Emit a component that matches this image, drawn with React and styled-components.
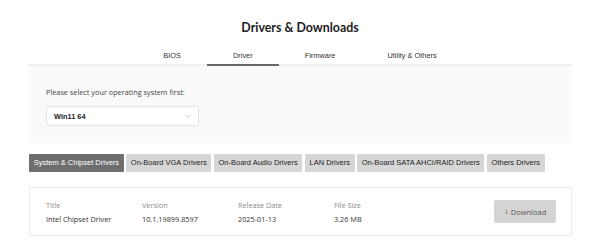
import React from "react"
import styled, { createGlobalStyle } from "styled-components"

const GlobalStyle = createGlobalStyle`
  *{
    margin:0;
    padding:0;
    box-sizing:border-box;
  }
  body{
    background:#fff;
    font-family:"Liberation Sans", Arial, sans-serif;
    color:#333;
  }
`

const Page = styled.div`
  width:544px;
  margin-left:28px;
  padding-top:18px;
`
const Title = styled.h1`
  font-family:Lato, "Open Sans", sans-serif;
  font-size:12.4px;
  font-weight:700;
  color:#222;
  text-align:center;
  line-height:20px;
`
const TabBar = styled.div`
  margin-top:8px;
  display:flex;
  justify-content:center;
  border-bottom:2px solid #efefef;
`
const Tab = styled.div`
  padding:3px 26px 0;
  height:20px;
  line-height:14px;
  font-size:7.4px;
  color:#333;
  border-bottom:2px solid ${p => (p.$active ? "#6a6a6a" : "transparent")};
  margin-bottom:-2px;
`
const Panel = styled.div`
  background:#fafafa;
  padding:20px 18px 17px;
`
const Label = styled.div`
  font-family:"Open Sans", sans-serif;
  font-size:7.3px;
  color:#444;
  line-height:12px;
`
const Select = styled.div`
  margin-top:8px;
  width:153px;
  height:20px;
  background:#fff;
  border:1px solid #e4e4e4;
  border-radius:2px;
  display:flex;
  align-items:center;
  justify-content:space-between;
  padding:0 7px;
  font-size:7.4px;
  font-weight:700;
  color:#222;
`
const Chevron = styled.svg`
  width:6px;
  height:4px;
`
const Categories = styled.div`
  margin-top:11px;
  display:flex;
  gap:2.5px;
  padding-left:1px;
`
const CatBtn = styled.div`
  height:18px;
  line-height:18px;
  padding:0 4.65px;
  font-size:7.5px;
  border-radius:1px;
  background:${p => (p.$active ? "#6e6e6e" : "#d6d6d6")};
  color:${p => (p.$active ? "#fff" : "#1e1e1e")};
`
const Card = styled.div`
  margin-top:15px;
  margin-left:1px;
  height:49px;
  border:1px solid #ececec;
  background:#fff;
  display:flex;
  align-items:center;
  padding:0 15px 0 16px;
`
const Col = styled.div`
  width:96px;
  font-family:"Open Sans", sans-serif;
  font-size:7.3px;
  line-height:14px;
`
const ColLabel = styled.div`
  color:#8a8a8a;
`
const ColValue = styled.div`
  color:#333;
`
const DownloadBtn = styled.div`
  margin-left:auto;
  width:62px;
  height:23px;
  background:#d4d4d4;
  border-radius:2px;
  display:flex;
  align-items:center;
  justify-content:center;
  font-family:"Open Sans", sans-serif;
  font-size:7.5px;
  color:#555;
  gap:1.5px;
`
const Arrow = styled.span`
  font-family:"DejaVu Sans", sans-serif;
  font-size:6.5px;
  color:#777;
`

const tabs = ["BIOS", "Driver", "Firmware", "Utility & Others"]
const cats = [
  "System & Chipset Drivers",
  "On-Board VGA Drivers",
  "On-Board Audio Drivers",
  "LAN Drivers",
  "On-Board SATA AHCI/RAID Drivers",
  "Others Drivers",
]
const cols = [
  ["Title", "Intel Chipset Driver"],
  ["Version", "10.1.19899.8597"],
  ["Release Date", "2025-01-13"],
  ["File Size", "3.26 MB"],
]

export default function App() {
  return (
    <Page>
      <GlobalStyle />
      <Title>Drivers &amp; Downloads</Title>
      <TabBar>
        {tabs.map(t => (
          <Tab key={t} $active={t === "Driver"}>{t}</Tab>
        ))}
      </TabBar>
      <Panel>
        <Label>Please select your operating system first:</Label>
        <Select>
          <span>Win11 64</span>
          <Chevron viewBox="0 0 6 4">
            <path d="M0.5 0.8 L3 3.2 L5.5 0.8" fill="none" stroke="#b5b5b5" strokeWidth="0.7" />
          </Chevron>
        </Select>
      </Panel>
      <Categories>
        {cats.map((c, i) => (
          <CatBtn key={c} $active={i === 0}>{c}</CatBtn>
        ))}
      </Categories>
      <Card>
        {cols.map(([l, v]) => (
          <Col key={l}>
            <ColLabel>{l}</ColLabel>
            <ColValue>{v}</ColValue>
          </Col>
        ))}
        <DownloadBtn><Arrow>↓</Arrow>Download</DownloadBtn>
      </Card>
    </Page>
  )
}
